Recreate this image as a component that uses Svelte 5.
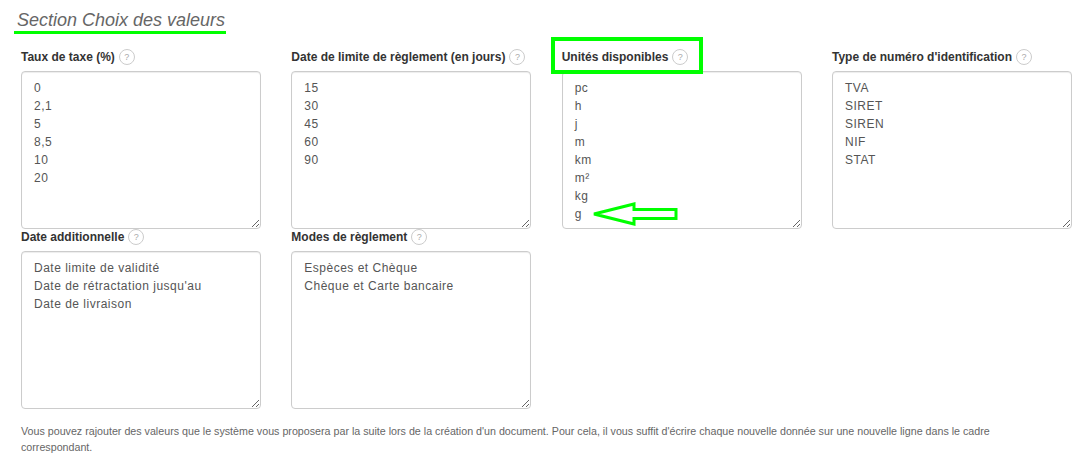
<script>
  const fields = [
    { label: "Taux de taxe (%)", value: "0\n2,1\n5\n8,5\n10\n20" },
    { label: "Date de limite de règlement (en jours)", value: "15\n30\n45\n60\n90" },
    { label: "Unités disponibles", value: "pc\nh\nj\nm\nkm\nm²\nkg\ng", marked: true },
    { label: "Type de numéro d'identification", value: "TVA\nSIRET\nSIREN\nNIF\nSTAT" },
    { label: "Date additionnelle", value: "Date limite de validité\nDate de rétractation jusqu'au\nDate de livraison" },
    { label: "Modes de règlement", value: "Espèces et Chèque\nChèque et Carte bancaire" }
  ];
</script>

<div class="page">
  <h2><span>Section Choix des valeurs</span></h2>

  <div class="fields">
    {#each fields as f}
      <div class="field">
        <div class="label">
          {f.label}
          <span class="help">?</span>
        </div>
        <textarea value={f.value}></textarea>
        {#if f.marked}
          <div class="box"></div>
          <svg class="arrow" width="90" height="26" viewBox="0 0 90 26">
            <path d="M4 13 L44 3 L44 8.500 L86 8.500 L86 17.500 L44 17.500 L44 23 Z" fill="none" stroke="#00ff00" stroke-width="3" />
          </svg>
        {/if}
      </div>
    {/each}
  </div>

  <p class="note">Vous pouvez rajouter des valeurs que le système vous proposera par la suite lors de la création d'un document. Pour cela, il vous suffit d'écrire chaque nouvelle donnée sur une nouvelle ligne dans le cadre correspondant.</p>
</div>

<style>
  :global(body) {
    margin: 0;
    background: #fff;
    font-family: "Liberation Sans", Arial, sans-serif;
  }
  .page {
    width: 1087px;
    height: 473px;
    box-sizing: border-box;
    padding: 10px 6px 0;
    overflow: hidden;
  }
  h2 {
    margin: 0 0 0 8px;
    font-size: 18px;
    font-weight: normal;
    font-style: italic;
    line-height: 20px;
    color: #666;
  }
  h2 span {
    display: inline-block;
    padding: 0 1px 1px 3px;
    border-bottom: 3px solid #00ff00;
  }
  .fields {
    display: grid;
    grid-template-columns: repeat(4, 270.33px);
    margin-top: 11px;
  }
  .field {
    position: relative;
    padding: 0 15px;
    height: 180px;
  }
  .label {
    display: flex;
    align-items: center;
    gap: 4px;
    height: 20px;
    margin-top: 2px;
    font-size: 12px;
    font-weight: bold;
    color: #333;
  }
  .help {
    width: 14px;
    height: 14px;
    border: 1px solid #ccc;
    border-radius: 50%;
    font-size: 9px;
    font-weight: normal;
    line-height: 14px;
    text-align: center;
    color: #aaa;
  }
  textarea {
    display: block;
    box-sizing: border-box;
    width: 240px;
    height: 158px;
    margin-top: 4px;
    padding: 7px 12px 6px;
    border: 1px solid #ccc;
    border-radius: 4px;
    font-family: "Liberation Sans", sans-serif;
    font-size: 12px;
    letter-spacing: 0.5px;
    line-height: 18px;
    color: #555;
    background: #fff;
    box-shadow: inset 0 1px 1px rgba(0, 0, 0, 0.075);
    outline: none;
  }
  .box {
    position: absolute;
    left: 4px;
    top: -8px;
    width: 144px;
    height: 29px;
    border: 4px solid #00ff00;
  }
  .arrow {
    position: absolute;
    left: 43px;
    top: 156px;
  }
  .note {
    width: 1030px;
    margin: 18px 15px 0;
    font-size: 10.7px;
    line-height: 16px;
    color: #666;
  }
</style>
